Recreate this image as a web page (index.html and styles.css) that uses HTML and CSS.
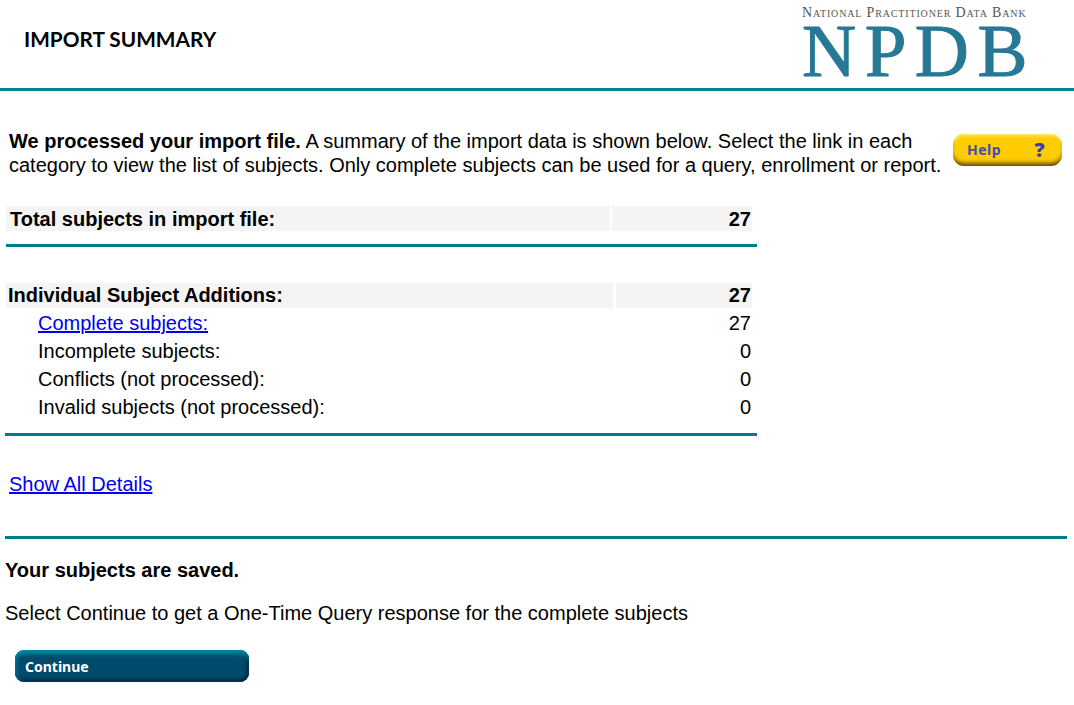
FILE: index.html
```html
<!DOCTYPE html>
<html lang="en">
<head>
    <meta charset="UTF-8">
    <title>Import Summary</title>
    <link rel="stylesheet" href="styles.css">
</head>
<body>
<div class='header'>
    <h1 class='pageTitle'>IMPORT SUMMARY</h1>
    <div class='logo'>
        <div class='logoTop'>National Practitioner Data Bank</div>
        <div class='logoMain'>NPDB</div>
    </div>
</div>

<div class='intro'>
    <p class='introText'><b>We processed your import file.</b> A summary of the import data is shown below. Select the link in each category to view the list of subjects. Only complete subjects can be used for a query, enrollment or report.</p>
    <a href="#" class='helpBtn'><span>Help</span><span class='helpMark'>?</span></a>
</div>

<div class='totalRow'>
    <div class='cellName'>Total subjects in import file:</div>
    <div class='cellNum'>27</div>
</div>
<div class='rule ruleTotal'></div>

<div class='headRow'>
    <div class='cellName'>Individual Subject Additions:</div>
    <div class='cellNum'>27</div>
</div>
<ul class='subjects'>
    <li><a href="#">Complete subjects:</a><span>27</span></li>
    <li>Incomplete subjects:<span>0</span></li>
    <li>Conflicts (not processed):<span>0</span></li>
    <li>Invalid subjects (not processed):<span>0</span></li>
</ul>
<div class='rule ruleSubjects'></div>

<a href="#" class='showAll'>Show All Details</a>
<div class='rule ruleFull'></div>

<p class='saved'>Your subjects are saved.</p>
<p class='select'>Select Continue to get a One-Time Query response for the complete subjects</p>
<a href="#" class='continueBtn'>Continue</a>
</body>
</html>
```
FILE: styles.css
```css
*{
    box-sizing:border-box;
}
html,body{
    margin:0;
    padding:0;
}
body{
    font-family:"Liberation Sans",Arial,sans-serif;
    font-size:20px;
    line-height:24px;
    color:#000;
    background:#fff;
}
a{
    color:#00e;
}
p{
    margin:0;
}

.header{
    display:flex;
    justify-content:space-between;
    height:91px;
    border-bottom:3px solid #008599;
}
.pageTitle{
    margin:26px 0 0 24px;
    font-family:"Lato","Noto Sans",sans-serif;
    font-size:20.8px;
    line-height:26px;
    font-weight:bold;
    letter-spacing:0;
}
.logo{
    width:272px;
    margin-left:auto;
    padding:6px 0 0 0;
    font-family:"Liberation Serif",serif;
}
.logoTop{
    font-size:14px;
    line-height:14px;
    font-variant:small-caps;
    letter-spacing:0.85px;
    color:#555;
    white-space:nowrap;
}
.logoMain{
    font-size:75px;
    line-height:62px;
    letter-spacing:8.5px;
    -webkit-text-stroke:1px #267895;
    color:#267895;
    white-space:nowrap;
}

.intro{
    display:flex;
    justify-content:space-between;
    padding:38px 12px 0 9px;
    height:115px;
}
.introText{
    width:935px;
}
.helpBtn{
    display:flex;
    justify-content:space-between;
    align-items:center;
    width:109px;
    height:32px;
    margin-top:5px;
    padding:0 17px 0 14px;
    border-radius:11px;
    background:#fc0;
    box-shadow:inset 0 -5px 4px -2px #5f4a05,inset 0 3px 3px -1px #ffe680;
    font-family:"Noto Sans",sans-serif;
    font-size:14px;
    font-weight:bold;
    letter-spacing:0.5px;
    color:#4a4ab0;
    text-decoration:none;
}
.helpMark{
    font-size:20px;
    font-weight:900;
    color:#3c3cb0;
}

.totalRow,.headRow{
    display:flex;
    font-weight:bold;
    height:25px;
    line-height:26px;
}
.totalRow{
    margin-left:6px;
    width:746px;
    gap:2px;
}
.totalRow .cellName{
    width:604px;
    padding-left:4px;
}
.headRow{
    margin:36px 0 0 6px;
    width:746px;
    gap:3px;
    line-height:24px;
}
.headRow .cellName{
    width:607px;
    padding-left:2px;
}
.cellName,.cellNum{
    background:#f4f4f4;
}
.cellNum{
    flex:1;
    text-align:right;
    padding-right:1px;
}

.rule{
    height:3px;
    background:#007a8c;
}
.ruleTotal{
    margin:13px 0 0 6px;
    width:751px;
}
.subjects{
    margin:1px 0 0;
    padding:0 0 0 38px;
    width:751px;
    list-style:none;
}
.subjects li{
    display:flex;
    justify-content:space-between;
    height:28px;
    line-height:28px;
}
.ruleSubjects{
    margin:12px 0 0 5px;
    width:752px;
}
.showAll{
    display:block;
    width:max-content;
    margin:36px 0 0 9px;
}
.ruleFull{
    margin:40px 0 0 5px;
    width:1062px;
}

.saved{
    margin:19px 0 0 5px;
    font-weight:bold;
}
.select{
    margin:19px 0 0 5px;
}
.continueBtn{
    display:flex;
    align-items:center;
    width:234px;
    height:32px;
    margin:25px 0 0 15px;
    padding:2px 0 0 10px;
    border-radius:9px;
    background:#004a6b;
    box-shadow:inset 0 6px 4px -2px #0088a8,inset 4px 0 4px -2px #00708f,inset 0 -4px 3px -1px #002a48,inset -4px 0 3px -1px #002a48;
    font-family:"Noto Sans",sans-serif;
    font-size:14px;
    font-weight:bold;
    color:#fff;
    text-decoration:none;
}
```
